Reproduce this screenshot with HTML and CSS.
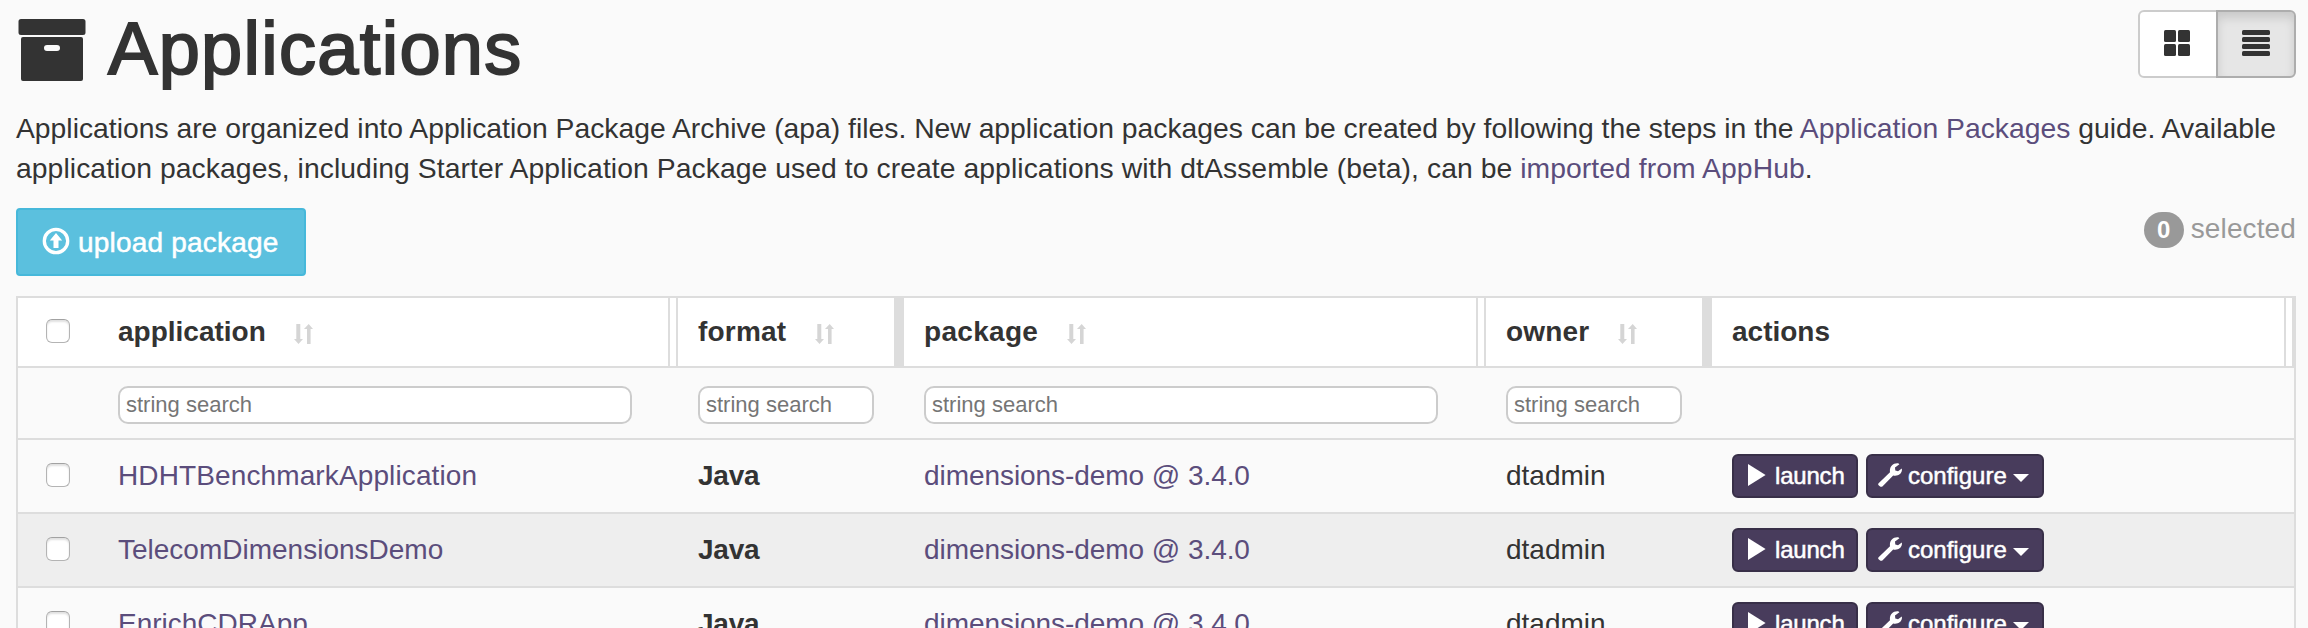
FILE: index.html
```html
<!DOCTYPE html>
<html lang="en">
<head>
<meta charset="utf-8">
<title>Applications</title>
<link rel="stylesheet" href="styles.css">
</head>
<body>
<svg class="sprite" width="0" height="0">
  <symbol id="sort" viewBox="0 0 19 20"><path d="M2.300 0h4v15h2.700L4.500 20 0 15h2.300zM13 20h3.600V5H19L14.700 0 10 5h3z"/></symbol>
  <symbol id="play" viewBox="0 0 18 22"><path d="M0 0L17.600 11 0 22z"/></symbol>
  <symbol id="wrench" viewBox="0 0 24 24"><path d="M.6 20.200L12 9.200C11.200 4.200 14.800-.4 20.600.4L21.400 1.200 17 4.400 17.300 7.500 20 8.200 23.800 5.600C24.800 10.200 20.200 13.800 15.200 12.600L4.400 23.400C3.600 24 2.600 24 1.800 23.300L.6 22.200C0 21.500 0 20.800.6 20.200z"/></symbol>
</svg>
<main class="page">
  <header class="head">
    <h1 class="title">
      <svg class="archive" viewBox="0 0 68 62"><path fill-rule="evenodd" d="M3 0h62q2.500 0 2.500 2.500v11q0 2.500-2.500 2.500H3Q.5 16 .5 13.500v-11Q.5 0 3 0zM5 18h58q2 0 2 2v40q0 2-2 2H5q-2 0-2-2V20q0-2 2-2zM29 26a3 3 0 0 0 0 6h10a3 3 0 0 0 0-6z"/></svg>
      <span class="title-text">Applications</span>
    </h1>
    <div class="views">
      <button class="view grid"><svg width="26" height="26" viewBox="0 0 26 26"><rect width="12" height="12" rx="1.500"/><rect x="14" width="12" height="12" rx="1.500"/><rect y="14" width="12" height="12" rx="1.500"/><rect x="14" y="14" width="12" height="12" rx="1.500"/></svg></button>
      <button class="view active"><svg width="28" height="26" viewBox="0 0 28 26"><rect width="28" height="5" rx="1.500"/><rect y="7" width="28" height="5" rx="1.500"/><rect y="14" width="28" height="5" rx="1.500"/><rect y="21" width="28" height="5" rx="1.500"/></svg></button>
    </div>
  </header>
  <p class="intro"><span class="l1">Applications are organized into Application Package Archive (apa) files. New application packages can be created by following the steps in the <a>Application Packages</a> guide. Available</span> <span class="l2">application packages, including Starter Application Package used to create applications with dtAssemble (beta), can be <a>imported from AppHub</a>.</span></p>
  <div class="toolbar">
    <button class="upload"><svg width="28" height="28" viewBox="0 0 28 28"><circle cx="14" cy="14" r="11.700" fill="none" stroke="#fff" stroke-width="3.300"/><path d="M14 6l6.200 7.500h-3.700V21h-5v-7.500H7.800z"/></svg><span>upload package</span></button>
    <div class="selected"><span class="badge">0</span><span>selected</span></div>
  </div>
  <section class="table">
    <div class="row thead">
      <div class="check"><i class="box"></i></div>
      <div class="th"><span class="w-app">application</span><svg class="sort"><use href="#sort"/></svg><i class="grip"></i></div>
      <div class="th"><span class="w-fmt">format</span><svg class="sort"><use href="#sort"/></svg><i class="grip solid"></i></div>
      <div class="th"><span class="w-pkg">package</span><svg class="sort"><use href="#sort"/></svg><i class="grip"></i></div>
      <div class="th"><span class="w-own">owner</span><svg class="sort"><use href="#sort"/></svg><i class="grip solid"></i></div>
      <div class="th"><span class="w-act">actions</span><i class="grip"></i></div>
    </div>
    <div class="row filters">
      <div></div>
      <div class="td"><input class="search wide" placeholder="string search"></div>
      <div class="td"><input class="search" placeholder="string search"></div>
      <div class="td"><input class="search wide" placeholder="string search"></div>
      <div class="td"><input class="search" placeholder="string search"></div>
      <div></div>
    </div>
    <div class="row">
      <div class="check"><i class="box"></i></div>
      <div class="td"><a class="name">HDHTBenchmarkApplication</a></div>
      <div class="td"><b>Java</b></div>
      <div class="td"><a class="dim">dimensions-demo @ 3.4.0</a></div>
      <div class="td">dtadmin</div>
      <div class="td actions"><button class="btn launch"><svg width="18" height="22"><use href="#play"/></svg><span>launch</span></button><button class="btn configure"><svg width="24" height="24"><use href="#wrench"/></svg><span>configure</span><i class="caret"></i></button></div>
    </div>
    <div class="row odd">
      <div class="check"><i class="box"></i></div>
      <div class="td"><a>TelecomDimensionsDemo</a></div>
      <div class="td"><b>Java</b></div>
      <div class="td"><a class="dim">dimensions-demo @ 3.4.0</a></div>
      <div class="td">dtadmin</div>
      <div class="td actions"><button class="btn launch"><svg width="18" height="22"><use href="#play"/></svg><span>launch</span></button><button class="btn configure"><svg width="24" height="24"><use href="#wrench"/></svg><span>configure</span><i class="caret"></i></button></div>
    </div>
    <div class="row">
      <div class="check"><i class="box"></i></div>
      <div class="td"><a>EnrichCDRApp</a></div>
      <div class="td"><b>Java</b></div>
      <div class="td"><a class="dim">dimensions-demo @ 3.4.0</a></div>
      <div class="td">dtadmin</div>
      <div class="td actions"><button class="btn launch"><svg width="18" height="22"><use href="#play"/></svg><span>launch</span></button><button class="btn configure"><svg width="24" height="24"><use href="#wrench"/></svg><span>configure</span><i class="caret"></i></button></div>
    </div>
  </section>
</main>
</body>
</html>
```

FILE: styles.css
```css
* { box-sizing: border-box; }
html, body { margin: 0; height: 628px; overflow: hidden; }
body { background: #fafafa; color: #333; font: 28px/40px "Liberation Sans", Arial, sans-serif; }
button { font: inherit; margin: 0; padding: 0; display: flex; align-items: center; }
svg { display: block; fill: currentColor; flex: none; }
a { color: #5b4d7c; }
.sprite { position: absolute; }
.page { height: 628px; overflow: hidden; padding: 10px 12px 0 16px; }
.head { display: flex; justify-content: space-between; height: 98px; }
.title { display: flex; margin: 0; font-size: 74px; line-height: 78px; font-weight: 400; }
.archive { width: 68px; height: 62px; margin: 9px 22px 0 2px; }
.title-text { letter-spacing: 1.300px; -webkit-text-stroke: 2px #333; }
.views { display: flex; }
.view { width: 80px; height: 68px; justify-content: center; border: 2px solid #ccc; border-radius: 6px 0 0 6px; background: #fff; color: #333; padding-bottom: 2px; }
.view.grid { padding-right: 2px; }
.view.active { margin-left: -2px; border-color: #adadad; border-radius: 0 6px 6px 0; background: #e6e6e6; box-shadow: inset 0 6px 10px rgba(0, 0, 0, .125); }
.intro { margin: 0; white-space: nowrap; font-size: 28.300px; }
.l1, .l2 { display: block; }
.l2 { letter-spacing: .070px; }
.toolbar { display: flex; justify-content: space-between; margin-top: 20px; height: 88px; }
.upload { width: 290px; height: 68px; border: 2px solid #46b8da; border-radius: 4px; background: #5bc0de; color: #fff; padding-left: 24px; gap: 8px; }
.upload svg { margin-bottom: 3px; }
.upload span { padding-top: 1px; letter-spacing: .200px; -webkit-text-stroke: .5px #fff; }
.selected { display: flex; height: 44px; gap: 7px; color: #999; align-items: flex-start; padding-top: 1px; letter-spacing: .120px; }
.badge { width: 40px; height: 36px; margin-top: 3px; border-radius: 18px; background: #999; color: #fff; text-align: center; font-weight: 700; font-size: 24px; line-height: 36px; }
.table { width: 2280px; border: 2px solid #ddd; border-bottom: 0; }
.row { display: grid; grid-template-columns: 80px 580px 226px 582px 226px 582px; height: 74px; border-bottom: 2px solid #ddd; }
.row.odd { background: #eee; }
.row.thead { height: 70px; background: #fff; }
.row.filters { height: 72px; }
.row > div { display: flex; align-items: center; }
.th, .td { padding-left: 20px; }
.th { font-weight: 700; }
.w-app { width: 147px; }
.w-fmt { width: 88px; letter-spacing: .200px; }
.w-pkg { width: 114px; letter-spacing: .300px; }
.w-own { width: 83px; letter-spacing: .150px; }
.sort { width: 19px; height: 20px; margin: 4px 0 0 29px; color: #d5d5d5; }
.grip { align-self: stretch; width: 10px; margin-left: auto; border: solid #ddd; border-width: 0 2px; }
.grip.solid { background: #ddd; }
.check { padding-left: 28px; }
.box { width: 24px; height: 24px; border: 1.500px solid #b4b4b4; border-top-color: #a2a2a2; border-radius: 6px; background: #fff; box-shadow: inset 0 2px 2px rgba(0, 0, 0, .12); margin-bottom: 2px; }
.search { width: 176px; height: 38px; margin: 4px 0 0; border: 2px solid #ccc; border-radius: 10px; background: #fff; padding: 0 6px; font: 22px "Liberation Sans", Arial, sans-serif; }
.search.wide { width: 514px; }
.search::placeholder { color: #757575; }
.name { letter-spacing: .120px; }
.dim { letter-spacing: -.060px; }
.td b { letter-spacing: -.200px; }
.actions { gap: 8px; }
.btn { height: 44px; border: 2px solid #382f48; border-radius: 6px; background: #483c5c; color: #fff; font-size: 24px; }
.btn span { -webkit-text-stroke: .5px #fff; }
.launch { width: 126px; padding-left: 14px; }
.launch svg { margin: 0 9px 2px 0; }
.launch span { letter-spacing: -.200px; }
.configure { width: 178px; padding-left: 10px; }
.configure svg { margin: 0 6px 3px 0; }
.caret { margin: 4px 0 0 6px; border: 8px solid transparent; border-top-color: #fff; border-bottom: 0; }
```
